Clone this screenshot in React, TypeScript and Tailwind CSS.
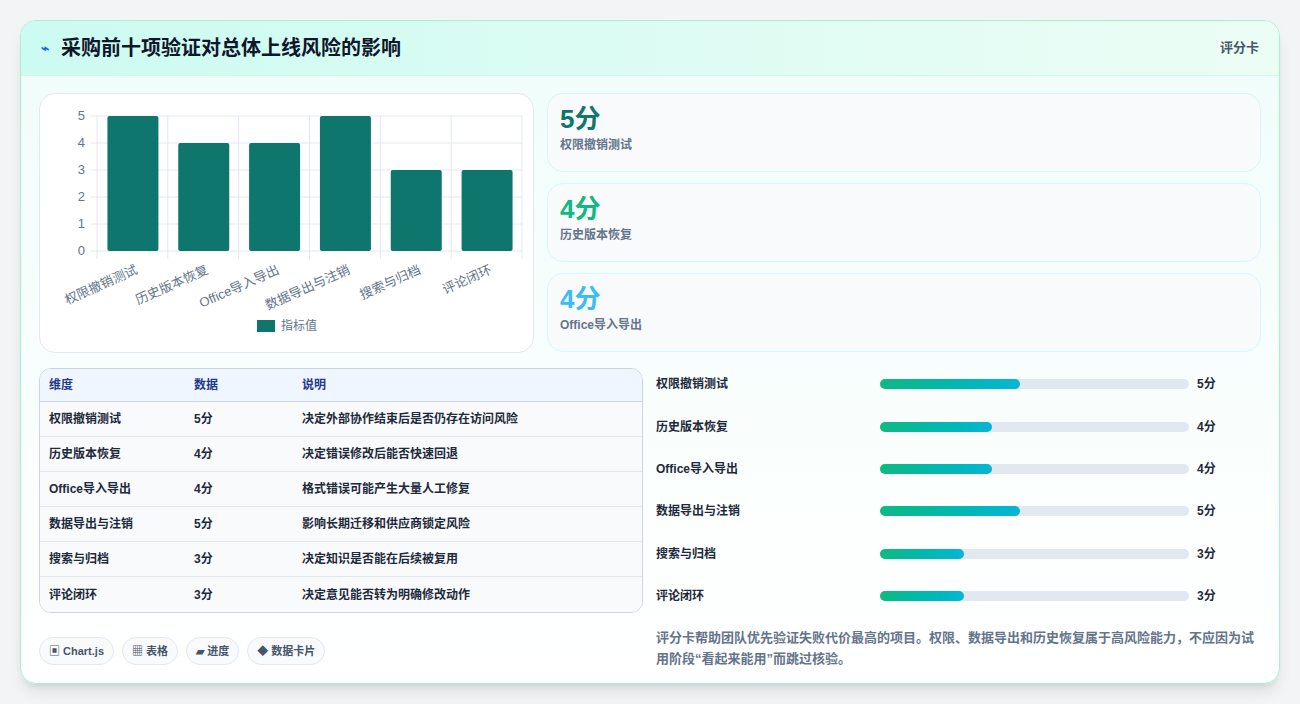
import React from "react";

const rows = [
  { n: "权限撤销测试", v: 5, d: "决定外部协作结束后是否仍存在访问风险", w: 140 },
  { n: "历史版本恢复", v: 4, d: "决定错误修改后能否快速回退", w: 112 },
  { n: "Office导入导出", v: 4, d: "格式错误可能产生大量人工修复", w: 112 },
  { n: "数据导出与注销", v: 5, d: "影响长期迁移和供应商锁定风险", w: 140 },
  { n: "搜索与归档", v: 3, d: "决定知识是否能在后续被复用", w: 84 },
  { n: "评论闭环", v: 3, d: "决定意见能否转为明确修改动作", w: 84 },
];

function Chart() {
  const x0 = 57, x1 = 482, y0 = 157, unit = 27;
  const step = (x1 - x0) / 6;
  return (
    <svg width="494" height="259" className="block">
      {[0, 1, 2, 3, 4, 5].map((i) => (
        <g key={i}>
          <line x1={x0 - 6} x2={x1} y1={y0 - i * unit} y2={y0 - i * unit} stroke="#e2e8f0" />
          <text x={45} y={y0 - i * unit + 4} textAnchor="end" fontSize="13" fill="#64748b">{i}</text>
        </g>
      ))}
      {[0, 1, 2, 3, 4, 5, 6].map((i) => (
        <line key={i} x1={x0 + i * step} x2={x0 + i * step} y1={y0 - 5 * unit} y2={y0 + 8} stroke="#e2e8f0" />
      ))}
      {rows.map((r, i) => {
        const cx = x0 + step * i + step / 2;
        const h = r.v * unit;
        return (
          <g key={i}>
            <rect x={cx - 25} y={y0 - h} width={51} height={h} rx={2} fill="#0f766e" />
            <text x={cx + 6} y={y0 + 22} textAnchor="end" fontSize="13" fill="#64748b" transform={`rotate(-24 ${cx + 6} ${y0 + 22})`}>{r.n}</text>
          </g>
        );
      })}
      <rect x={217} y={226} width={18} height={12} fill="#0f766e" />
      <text x={241} y={236} fontSize="12" fill="#64748b">指标值</text>
    </svg>
  );
}

export default function App() {
  const stats = [
    { v: "5分", c: "text-[#0f766e]", l: "权限撤销测试" },
    { v: "4分", c: "text-[#10b981]", l: "历史版本恢复" },
    { v: "4分", c: "text-[#38bdf8]", l: "Office导入导出" },
  ];
  return (
    <div className="w-[1300px] h-[704px] bg-[#f3f4f6] pt-5 px-5" style={{ fontFamily: '"Liberation Sans", "Noto Sans CJK SC", sans-serif' }}>
      <div className="h-[664px] rounded-2xl border border-[#a7f3d0] bg-gradient-to-b from-[#f0fdfa] to-white shadow-lg overflow-hidden">
        <div className="h-[55px] flex items-center justify-between px-5 bg-gradient-to-r from-[#ccfbf1] to-[#ecfdf5] border-b border-[#d1fae5]">
          <div className="flex items-center gap-3">
            <span className="text-[#2563eb] text-sm font-bold">⌁</span>
            <span className="text-[20px] font-bold text-[#0f172a]">采购前十项验证对总体上线风险的影响</span>
          </div>
          <span className="text-[13px] font-bold text-[#475569]">评分卡</span>
        </div>
        <div className="px-[18px] pt-[17px] flex flex-col gap-[15px]">
          <div className="flex gap-[13px]">
            <div className="w-[495px] h-[260px] rounded-2xl border border-[#e2e8f0] bg-white"><Chart /></div>
            <div className="flex-1 flex flex-col gap-[11px]">
              {stats.map((s, i) => (
                <div key={i} className="h-[79px] rounded-2xl border border-[#cffafe] bg-[#f8fafc] px-3 pt-[8px]">
                  <div className={`text-[26px] font-bold leading-[34px] ${s.c}`}>{s.v}</div>
                  <div className="text-[12px] font-bold text-[#64748b]">{s.l}</div>
                </div>
              ))}
            </div>
          </div>
          <div className="flex gap-[13px]">
            <div className="w-[604px]">
              <div className="rounded-xl border border-[#cbd5e1] overflow-hidden bg-white">
                <div className="h-[33px] flex items-center bg-[#eff6ff] border-b border-[#cbd5e1] text-[12px] font-bold text-[#1e3a8a]">
                  <div className="w-[154px] pl-[9px]">维度</div><div className="w-[108px]">数据</div><div>说明</div>
                </div>
                {rows.map((r, i) => (
                  <div key={i} className={`h-[35px] flex items-center text-[12px] font-bold text-[#1e293b] bg-[#f8fafc] ${i < 5 ? "border-b border-[#e2e8f0]" : ""}`}>
                    <div className="w-[154px] pl-[9px]">{r.n}</div><div className="w-[108px]">{r.v}分</div><div>{r.d}</div>
                  </div>
                ))}
              </div>
              <div className="flex gap-2 mt-6">
                {["▣ Chart.js", "▦ 表格", "▰ 进度", "◆ 数据卡片"].map((t) => (
                  <span key={t} className="h-7 px-[9px] flex items-center rounded-full border border-[#e2e8f0] bg-[#f8fafc] text-[11px] font-bold text-[#475569]">{t}</span>
                ))}
              </div>
            </div>
            <div className="flex-1 -mt-[5px]">
              <div className="flex flex-col">
                {rows.map((r, i) => (
                  <div key={i} className="h-[42.4px] flex items-center text-[12px] font-bold text-[#1e293b]">
                    <div className="w-[224px]">{r.n}</div>
                    <div className="w-[309px] h-[10px] rounded-full bg-[#e2e8f0]">
                      <div className="h-full rounded-full bg-gradient-to-r from-[#10b981] to-[#06b6d4]" style={{ width: r.w }} />
                    </div>
                    <div className="ml-2">{r.v}分</div>
                  </div>
                ))}
              </div>
              <p className="mt-[10px] text-[13px] leading-[21px] font-bold text-[#64748b]">评分卡帮助团队优先验证失败代价最高的项目。权限、数据导出和历史恢复属于高风险能力，不应因为试用阶段“看起来能用”而跳过核验。</p>
            </div>
          </div>
        </div>
      </div>
    </div>
  );
}
